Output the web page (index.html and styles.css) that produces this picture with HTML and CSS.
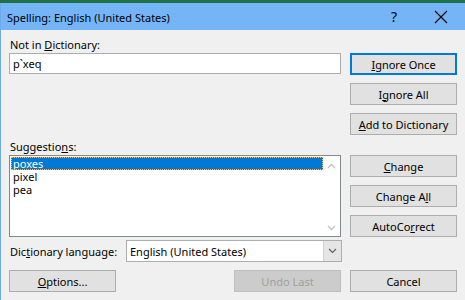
FILE: index.html
```html
<!DOCTYPE html>
<html>
<head>
<meta charset="utf-8">
<link rel="stylesheet" href="styles.css">
</head>
<body>
<div class="window">
  <div class="titlebar">
    <span class="title">Spelling: English (United States)</span>
    <span class="help">?</span>
    <span class="close">
      <svg width="14" height="14" viewBox="0 0 14 14"><path d="M1 1 L13 13 M13 1 L1 13" stroke="#000" stroke-width="1.1" fill="none"/></svg>
    </span>
  </div>
  <div class="client">
    <div class="main">
      <div class="left">
        <div class="label">Not in <u>D</u>ictionary:</div>
        <div class="textbox">p`xeq</div>
        <div class="label sugg-label">Suggestio<u>n</u>s:</div>
        <div class="listbox">
          <div class="items">
            <div class="item selected">poxes</div>
            <div class="item">pixel</div>
            <div class="item">pea</div>
          </div>
          <div class="scroll">
            <svg width="9" height="6" viewBox="0 0 9 6"><path d="M1 5 L4.5 1.5 L8 5" stroke="#c2c2c2" stroke-width="1.3" fill="none"/></svg>
            <svg width="9" height="6" viewBox="0 0 9 6"><path d="M1 1 L4.5 4.5 L8 1" stroke="#c2c2c2" stroke-width="1.3" fill="none"/></svg>
          </div>
        </div>
      </div>
      <div class="right">
        <div class="btn default"><u>I</u>gnore Once</div>
        <div class="btn">I<u>g</u>nore All</div>
        <div class="btn"><u>A</u>dd to Dictionary</div>
        <div class="btn gap"><u>C</u>hange</div>
        <div class="btn">Change A<u>l</u>l</div>
        <div class="btn">AutoCo<u>r</u>rect</div>
      </div>
    </div>
    <div class="langrow">
      <div class="langlabel">Dic<u>t</u>ionary language:</div>
      <div class="select">
        <span class="selval">English (United States)</span>
        <span class="arrow">
          <svg width="9" height="6" viewBox="0 0 9 6"><path d="M1 1 L4.5 4.5 L8 1" stroke="#606060" stroke-width="1.2" fill="none"/></svg>
        </span>
      </div>
    </div>
    <div class="bottom">
      <div class="btn"><u>O</u>ptions...</div>
      <div class="btn disabled">Undo Last</div>
      <div class="btn">Cancel</div>
    </div>
  </div>
</div>
</body>
</html>
```
FILE: styles.css
```css
html, body {
  margin: 0;
  padding: 0;
}
body {
  width: 465px;
  height: 300px;
  overflow: hidden;
  background: #1f7044;
  font-family: "Noto Sans", "Open Sans", sans-serif;
  font-size: 11px;
  color: #000;
}
.window {
  margin-top: 3px;
  height: 297px;
  background: #f0f0f0;
  border-left: 1px solid #6fa9e6;
  box-sizing: border-box;
}
.titlebar {
  height: 27px;
  background: #75b4f7;
  display: flex;
  align-items: center;
  padding-left: 6px;
}
.title {
  flex: 1;
  padding-top: 1px;
  white-space: nowrap;
}
.help {
  width: 14px;
  font-size: 14px;
  margin-right: 33px;
  text-align: center;
}
.close {
  width: 14px;
  height: 14px;
  margin-right: 17px;
  display: flex;
}
.client {
  padding: 7px 0 0 8px;
}
.main {
  display: grid;
  grid-template-columns: 332px 107px;
  column-gap: 9px;
}
.left {
  display: flex;
  flex-direction: column;
}
.label {
  height: 16px;
  line-height: 16px;
  padding-left: 1px;
  white-space: nowrap;
}
.sugg-label {
  margin-top: 66px;
  height: 15px;
  line-height: 14px;
}
.textbox {
  height: 21px;
  box-sizing: border-box;
  border: 1px solid #abadb3;
  background: #fff;
  padding-left: 3px;
  line-height: 19px;
}
.listbox {
  height: 82px;
  box-sizing: border-box;
  border: 1px solid #828790;
  background: #fff;
  display: flex;
}
.items {
  flex: 1;
  padding: 1px 0 0 1px;
}
.item {
  height: 13px;
  line-height: 13px;
  padding-left: 2px;
}
.item.selected {
  background: #0078d7;
  color: #fff;
  outline: 1px dotted #f5b55a;
  outline-offset: -1px;
}
.scroll {
  width: 17px;
  display: flex;
  flex-direction: column;
  justify-content: space-between;
  align-items: center;
  padding: 7px 0 5px;
}
.right {
  padding-top: 16px;
  display: flex;
  flex-direction: column;
  gap: 8px;
}
.btn {
  height: 22px;
  box-sizing: border-box;
  border: 1px solid #adadad;
  background: #e1e1e1;
  display: flex;
  align-items: center;
  justify-content: center;
  width: 107px;
  white-space: nowrap;
}
.btn.default {
  border: 2px solid #0078d7;
}
.btn.gap {
  margin-top: 12px;
}
.btn.disabled {
  background: #cccccc;
  border-color: #bfbfbf;
  color: #a0a0a0;
}
.langrow {
  display: flex;
  align-items: center;
  margin-top: 3px;
  height: 22px;
}
.langlabel {
  width: 116px;
  padding-left: 1px;
  white-space: nowrap;
}
.select {
  width: 216px;
  height: 22px;
  box-sizing: border-box;
  border: 1px solid #adadad;
  background: #fff;
  display: flex;
  align-items: center;
}
.selval {
  flex: 1;
  padding-left: 3px;
}
.arrow {
  width: 17px;
  height: 20px;
  background: #e5e5e5;
  border-left: 1px solid #d0d0d0;
  display: flex;
  align-items: center;
  justify-content: center;
}
.bottom {
  display: flex;
  margin-top: 8px;
}
.bottom .btn:nth-child(2) {
  margin-left: auto;
}
.bottom .btn:nth-child(3) {
  margin-left: 9px;
  margin-right: 8px;
}
```
